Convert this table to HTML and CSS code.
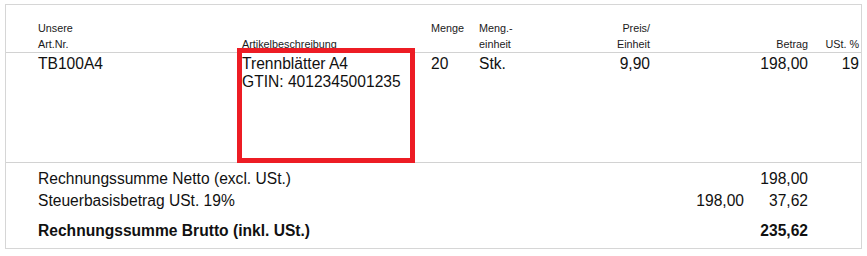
FILE: index.html
```html
<!DOCTYPE html>
<html lang="de">
<head>
<meta charset="utf-8">
<title>Rechnung</title>
<link rel="stylesheet" href="styles.css">
</head>
<body>
<div class="box">
  <div class="row head">
    <div class="cell">Unsere<br>Art.Nr.</div>
    <div class="cell bottom">Artikelbeschreibung</div>
    <div class="cell top">Menge</div>
    <div class="cell">Meng.-<br>einheit</div>
    <div class="cell right">Preis/<br>Einheit</div>
    <div class="cell right bottom">Betrag</div>
    <div class="cell right bottom">USt. %</div>
  </div>
  <div class="row item">
    <div class="cell">TB100A4</div>
    <div class="cell">Trennblätter A4<br>GTIN: 4012345001235</div>
    <div class="cell">20</div>
    <div class="cell">Stk.</div>
    <div class="cell right">9,90</div>
    <div class="cell right">198,00</div>
    <div class="cell right">19</div>
  </div>
  <div class="totals">
    <div class="trow">
      <div class="label">Rechnungssumme Netto (excl. USt.)</div>
      <div class="num"></div>
      <div class="num">198,00</div>
    </div>
    <div class="trow">
      <div class="label">Steuerbasisbetrag USt. 19%</div>
      <div class="num">198,00</div>
      <div class="num">37,62</div>
    </div>
    <div class="trow total">
      <div class="label">Rechnungssumme Brutto (inkl. USt.)</div>
      <div class="num"></div>
      <div class="num">235,62</div>
    </div>
  </div>
  <div class="highlight"></div>
</div>
</body>
</html>
```

FILE: styles.css
```css
* { box-sizing: border-box; }
html, body { margin: 0; padding: 0; background: #fff; }
body {
  font-family: "Liberation Sans", Arial, sans-serif;
  color: #111;
}
.box {
  position: relative;
  margin: 4px 0 0 5px;
  width: 857px;
  border: 1px solid #d6d6d6;
}
.row {
  display: grid;
  grid-template-columns: 204px 189px 48px 81px 90px 158px 51px;
  padding: 0 2px 0 32px;
}
.head {
  padding-top: 15px;
  height: 48px;
  border-bottom: 1px solid #d2d2d2;
  font-size: 10.8px;
  line-height: 16px;
  color: #1a1a1a;
}
.cell { white-space: nowrap; }
.head .bottom { align-self: end; }
.head .top { align-self: start; }
.right { text-align: right; }
.item {
  height: 110px;
  padding-top: 1.5px;
  border-bottom: 1px solid #d2d2d2;
  font-size: 15.6px;
  line-height: 18.5px;
  align-content: start;
}
.totals {
  padding: 4.5px 53px 5.5px 32px;
  font-size: 15.6px;
  line-height: 22px;
}
.trow {
  display: grid;
  grid-template-columns: 1fr 96px 64px;
}
.trow.total {
  margin-top: 8.7px;
  font-weight: bold;
}
.num { text-align: right; }
.highlight {
  position: absolute;
  left: 231px;
  top: 43px;
  width: 178px;
  height: 115px;
  border: 5px solid #ed1c24;
}
```
